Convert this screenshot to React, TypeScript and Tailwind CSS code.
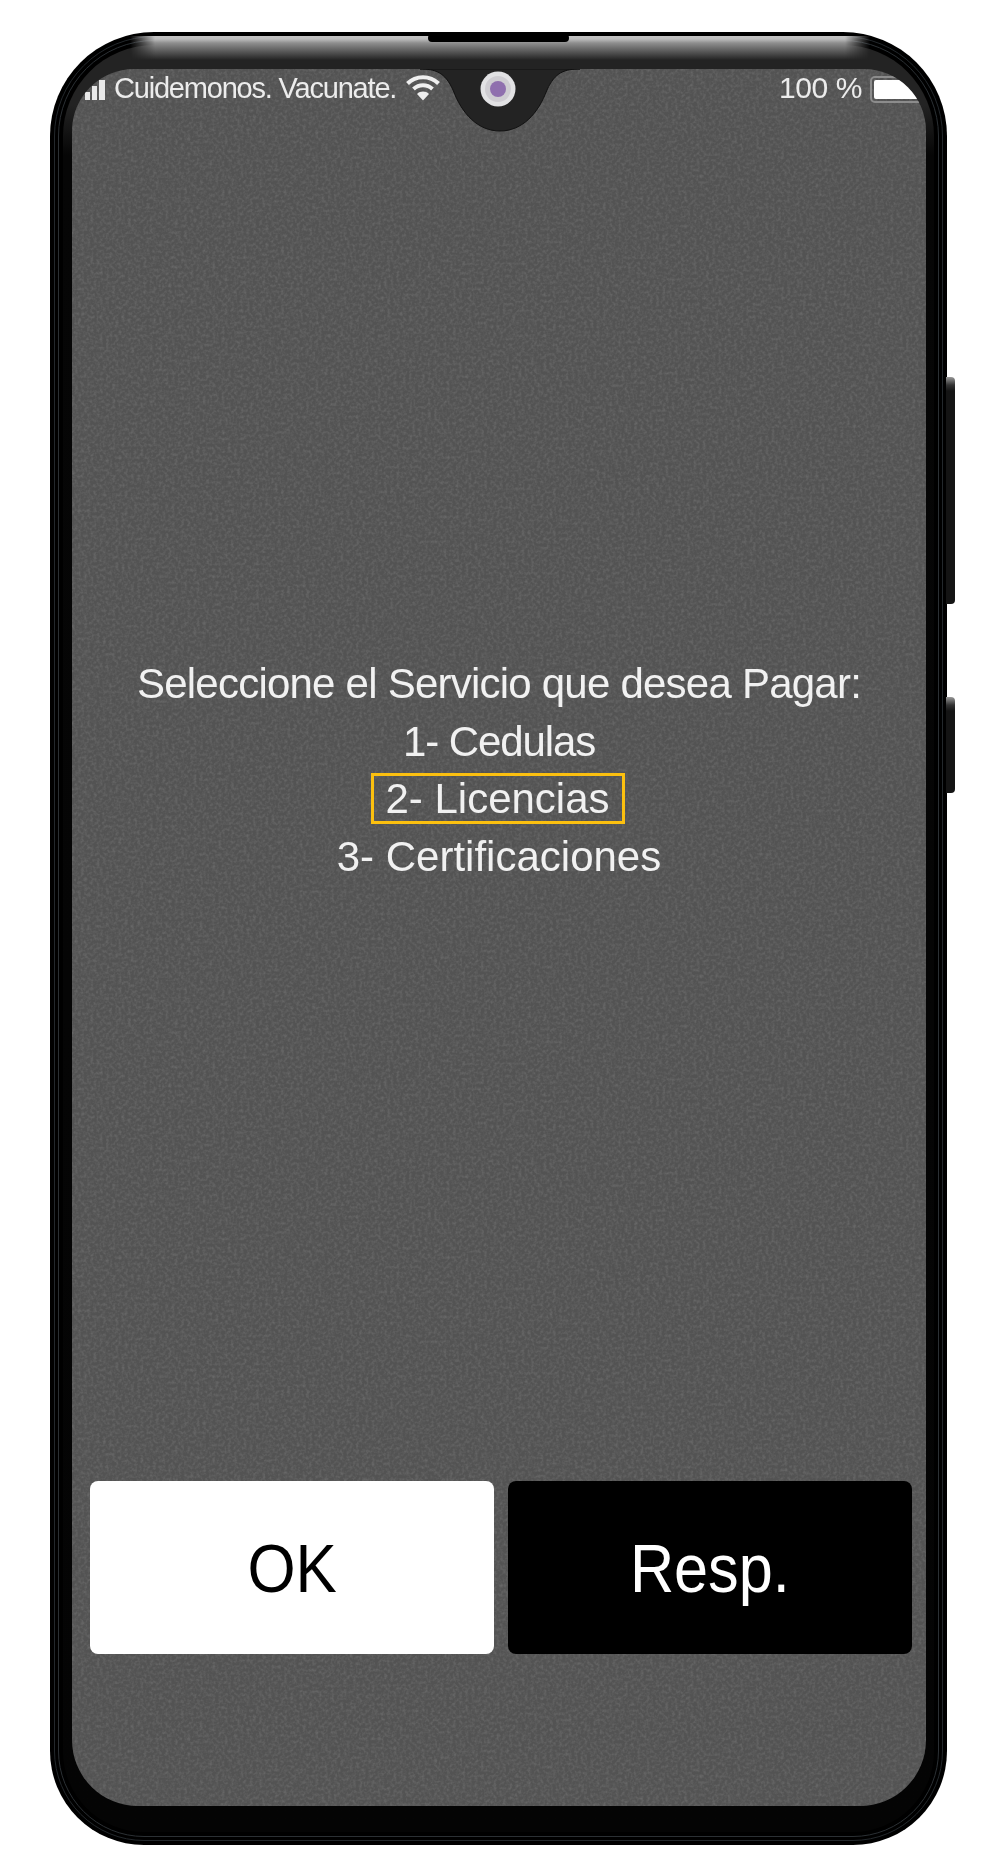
export default function App() {
  return (
    <div className="w-[1000px] h-[1875px] bg-white pt-[32px] pl-[50px] overflow-hidden font-['Liberation_Sans',Arial,sans-serif]">
      {/* phone body */}
      <div className="relative w-[897px] h-[1813px] rounded-t-[104px] rounded-b-[94px] bg-black p-[4px]">
        {/* side buttons */}
        <div className="absolute left-[896px] top-[345px] w-[9px] h-[227px] rounded-r-[4px] bg-[linear-gradient(#999_0,#333_8px,#141414_14px,#141414_100%)]" />
        <div className="absolute left-[896px] top-[665px] w-[9px] h-[96px] rounded-r-[4px] bg-[linear-gradient(#999_0,#333_8px,#141414_14px,#141414_100%)]" />

        {/* bevel rings */}
        <div className="h-full rounded-t-[100px] rounded-b-[90px] border border-[#23282c] p-[3px]">
          <div className="h-full rounded-t-[96px] rounded-b-[86px] border border-[#2b3034] p-[4px]">
            <div className="h-full rounded-t-[91px] rounded-b-[81px] pl-[9px] pr-[8px] pt-[24px] pb-[25px] bg-[linear-gradient(#232323_0,#232323_60px,#060606_110px,#040404_100%)]">
              {/* screen */}
              <div className="relative w-[854px] h-[1737px] rounded-t-[62px] rounded-b-[66px] overflow-hidden bg-[#535353] flex flex-col text-white">
                <svg className="absolute inset-0 w-full h-full" aria-hidden="true">
                  <filter id="grain" x="0" y="0" width="100%" height="100%">
                    <feTurbulence type="fractalNoise" baseFrequency="0.32" numOctaves="2" seed="4" />
                    <feColorMatrix values="0 0 0 0 0.75  0 0 0 0 0.75  0 0 0 0 0.75  1.6 0 0 0 -0.62" />
                  </filter>
                  <rect width="100%" height="100%" filter="url(#grain)" opacity="0.18" />
                </svg>

                {/* status bar */}
                <div className="relative h-[41px] flex items-start text-[#ececec] blur-[0.4px]">
                  <div className="ml-[13px] mt-[11px] flex items-end gap-[2px] h-[20px]">
                    <span className="w-[5px] h-[8px] bg-[#e8e8e8]" />
                    <span className="w-[5px] h-[14px] bg-[#e8e8e8]" />
                    <span className="w-[6px] h-[20px] bg-[#e8e8e8]" />
                  </div>
                  <span className="ml-[9px] mt-[3px] text-[29px] leading-[32px] tracking-[-1.2px] whitespace-nowrap">Cuidemonos. Vacunate.</span>
                  <svg className="ml-[10px] mt-[4px]" width="34" height="28" viewBox="0 0 34 28" aria-hidden="true">
                    <path d="M1.5 10.5C10 2 24 2 32.5 10.5" fill="none" stroke="#efefef" strokeWidth="4" />
                    <path d="M7.5 16C13 11 21 11 26.5 16" fill="none" stroke="#efefef" strokeWidth="4" />
                    <path d="M11 21C14.5 17.8 19.5 17.8 23 21L17 27.5Z" fill="#efefef" />
                  </svg>
                  <span className="ml-auto mt-[3px] text-[30px] leading-[32px] tracking-[-0.4px] whitespace-nowrap">100 %</span>
                  <div className="ml-[8px] mr-[-10px] mt-[7px] w-[66px] h-[27px] rounded-[5px] border-2 border-[#8c8c8c] p-[2px]">
                    <div className="w-full h-[19px] rounded-[2px] bg-white" />
                  </div>
                </div>

                {/* notch */}
                <svg className="absolute left-[348px] top-0" width="160" height="63" viewBox="0 0 160 63" aria-hidden="true">
                  <path d="M0 0C15 0 25 3 33 21C42 45 58 62 80 62C102 62 118 45 127 21C135 3 145 0 160 0Z" fill="#232323" stroke="#111" strokeWidth="1" />
                  <circle cx="78" cy="20" r="17.5" fill="#e2e2e4" />
                  <circle cx="78" cy="20" r="13" fill="#cfcdd2" />
                  <circle cx="78" cy="20" r="8" fill="#8f6fae" />
                </svg>

                {/* message */}
                <div className="relative mt-[545px] flex flex-col items-center text-[42px] leading-[57.5px] text-[#f1f1f1] whitespace-nowrap">
                  <div className="h-[57.5px] tracking-[-0.77px] blur-[0.4px]">Seleccione el Servicio que desea Pagar:</div>
                  <div className="h-[57.5px] tracking-[-1.1px] blur-[0.4px]">1- Cedulas</div>
                  <div className="h-[57.5px] flex items-center">
                    <div className="mr-[3px] w-[254px] h-[51px] border-[3px] border-[#fcc00f] flex items-center justify-center">
                      <span className="blur-[0.4px]">2- Licencias</span>
                    </div>
                  </div>
                  <div className="h-[57.5px] blur-[0.4px]">3- Certificaciones</div>
                </div>

                {/* buttons */}
                <div className="relative mt-auto mb-[152px] ml-[18px] mr-[14px] grid grid-cols-2 gap-[14px] h-[173px] text-[68px]">
                  <div className="rounded-[8px] bg-white text-black flex items-center justify-center">
                    <span className="inline-block scale-x-[0.91]">OK</span>
                  </div>
                  <div className="rounded-[8px] bg-black text-white flex items-center justify-center">
                    <span className="inline-block scale-x-[0.9]">Resp.</span>
                  </div>
                </div>
              </div>
            </div>
          </div>
        </div>

        {/* top highlight */}
        <div className="absolute left-[80px] right-[77px] top-[4px] h-[24px] bg-[linear-gradient(#c4c4c4_0,#bdbdbd_3px,#8e8e8e_7px,#6e6e6e_12px,#232323_24px)] [mask-image:linear-gradient(90deg,transparent,#000_25px,#000_calc(100%-25px),transparent)]" />
        {/* earpiece */}
        <div className="absolute left-[378px] top-[2px] w-[141px] h-[8px] rounded-[4px] bg-black" />
      </div>
    </div>
  );
}
